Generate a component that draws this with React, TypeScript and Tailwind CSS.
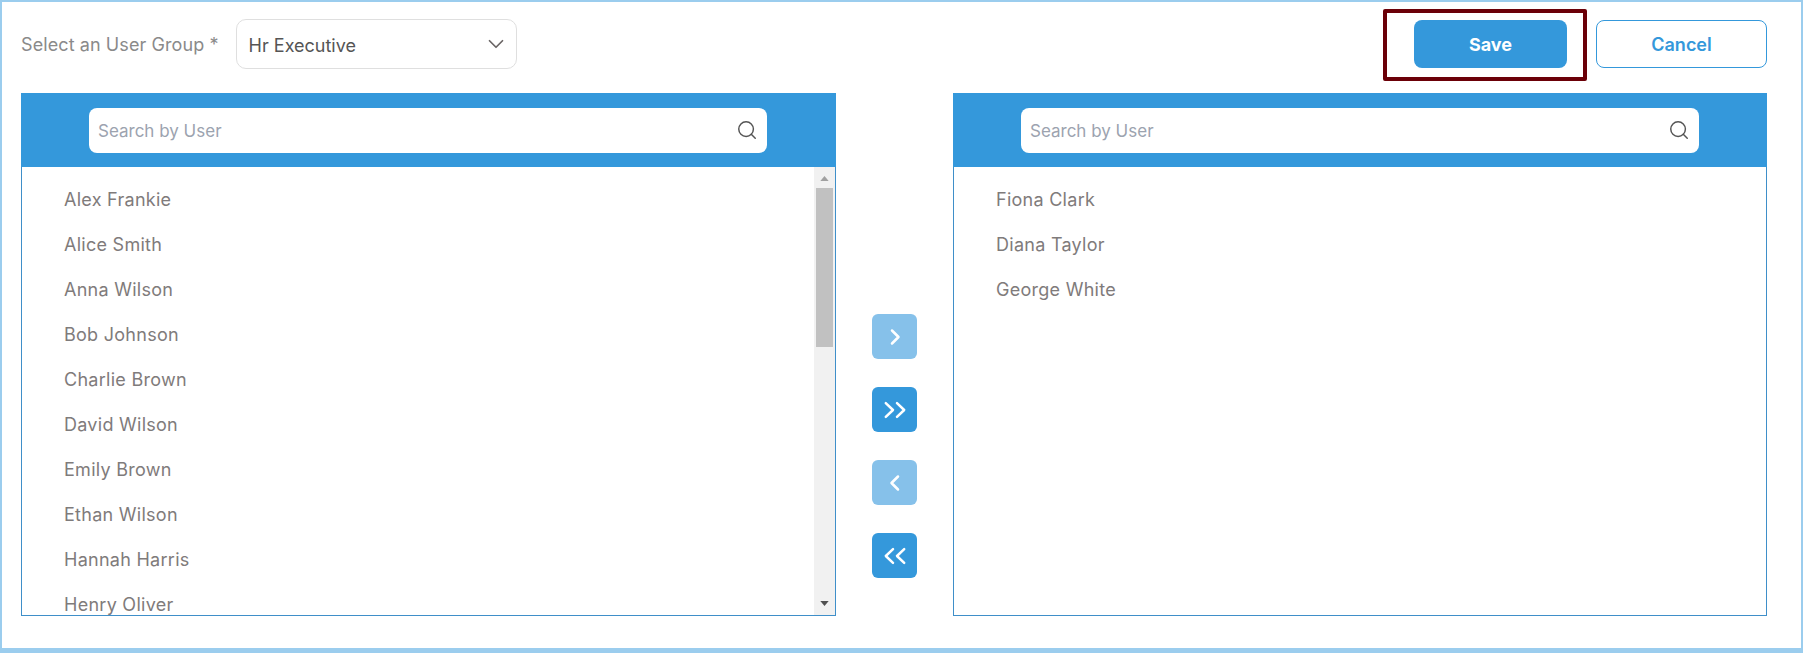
import { ChevronDown, Search } from "lucide-react";

const LEFT_USERS = [
  "Alex Frankie",
  "Alice Smith",
  "Anna Wilson",
  "Bob Johnson",
  "Charlie Brown",
  "David Wilson",
  "Emily Brown",
  "Ethan Wilson",
  "Hannah Harris",
  "Henry Oliver",
];
const RIGHT_USERS = ["Fiona Clark", "Diana Taylor", "George White"];

function NavIcon({ points }: { points: string[] }) {
  return (
    <svg viewBox="0 0 24 24" className="h-6 w-6" fill="none" stroke="currentColor" strokeWidth={2.5} strokeLinecap="round" strokeLinejoin="round">
      {points.map((p) => (
        <polyline key={p} points={p} />
      ))}
    </svg>
  );
}

function NavButton({ points, muted }: { points: string[]; muted?: boolean }) {
  return (
    <button
      type="button"
      className={
        muted
          ? "flex h-[45px] w-[45px] items-center justify-center rounded-md bg-[#86c1ea] text-white"
          : "flex h-[45px] w-[45px] items-center justify-center rounded-md bg-[#3498db] text-white"
      }
    >
      <NavIcon points={points} />
    </button>
  );
}

function UserPanel({ users, scroll, width }: { users: string[]; scroll?: boolean; width: string }) {
  return (
    <div className={`flex h-[523px] flex-col border border-t-0 border-[#3f8fc9] ${width}`}>
      <div className={scroll ? "-mx-px flex h-[74px] shrink-0 items-center justify-center bg-[#3498db] pr-px" : "-mx-px flex h-[74px] shrink-0 items-center justify-center bg-[#3498db]"}>
        <div className="flex h-[45px] w-[678px] items-center justify-between rounded-lg bg-white pl-[9px] pr-[9px]">
          <input
            placeholder="Search by User"
            className="w-full bg-transparent pt-[3px] text-[17px] text-[#555] outline-none placeholder:text-[#9ca3af]"
          />
          <Search className="h-[22px] w-[22px] shrink-0 text-[#555]" strokeWidth={1.6} />
        </div>
      </div>
      <div className="flex min-h-0 flex-1">
        <ul className="min-w-0 flex-1 overflow-hidden pt-[10px]">
          {users.map((name) => (
            <li key={name} className="flex h-[45px] items-center pl-[42px] text-[18px] tracking-[0.015em] text-[#7f7b7b]">
              {name}
            </li>
          ))}
        </ul>
        {scroll && (
          <div className="flex w-[21px] shrink-0 flex-col items-center bg-[#f1f1f1] px-[2px]">
            <svg viewBox="0 0 10 6" className="mt-[9px] h-[5px] w-[9px] fill-[#a0a0a0]">
              <polygon points="5,0 10,6 0,6" />
            </svg>
            <div className="mt-[7px] h-[159px] w-full bg-[#c1c1c1]" />
            <svg viewBox="0 0 10 6" className="mt-auto mb-[9px] h-[5px] w-[9px] fill-[#505050]">
              <polygon points="0,0 10,0 5,6" />
            </svg>
          </div>
        )}
      </div>
    </div>
  );
}

export default function App() {
  return (
    <div className="h-[654px] w-[1803px] bg-white pb-px font-['Inter',sans-serif]">
      <div className="h-full border-[2px] border-b-[5px] border-[#9bcdee]">
        <div className="flex items-center justify-between pl-[19px] pr-[34px] pt-[17px] pb-[24px]">
          <div className="flex items-center gap-[17px]">
            <label className="text-[18px] tracking-[0.005em] text-[#8a8a8a]">Select an User Group *</label>
            <button
              type="button"
              className="flex h-[50px] w-[281px] items-center justify-between rounded-[10px] border border-[#dfdfdf] pl-[12px] pr-[7px] text-[18px] text-[#555]"
            >
              <span className="pt-[2px]">Hr Executive</span>
              <ChevronDown className="h-[26px] w-[26px] text-[#6b6666]" strokeWidth={1.6} />
            </button>
          </div>
          <div className="flex items-center gap-[29px]">
            <div className="relative">
              <button type="button" className="h-[48px] w-[153px] rounded-lg bg-[#3498db] text-[18px] font-bold text-white">
                Save
              </button>
              <div className="pointer-events-none absolute -bottom-[13px] -left-[31px] -right-[20px] -top-[11px] rounded-[2px] border-4 border-[#6b0008]" />
            </div>
            <button type="button" className="h-[48px] w-[171px] rounded-lg border border-[#3498db] text-[18px] font-semibold text-[#3498db]">
              Cancel
            </button>
          </div>
        </div>
        <div className="flex pl-[19px]">
          <UserPanel users={LEFT_USERS} scroll width="w-[815px]" />
          <div className="flex w-[117px] shrink-0 flex-col items-center gap-[28px] pt-[221px]">
            <NavButton muted points={["9,5.5 15.5,12 9,18.5"]} />
            <NavButton points={["2.8,5.2 10,12 2.8,18.8", "14,5.2 21.2,12 14,18.8"]} />
            <NavButton muted points={["15,5.5 8.5,12 15,18.5"]} />
            <NavButton points={["10,5.2 2.8,12 10,18.8", "21.2,5.2 14,12 21.2,18.8"]} />
          </div>
          <UserPanel users={RIGHT_USERS} width="w-[814px]" />
        </div>
      </div>
    </div>
  );
}
